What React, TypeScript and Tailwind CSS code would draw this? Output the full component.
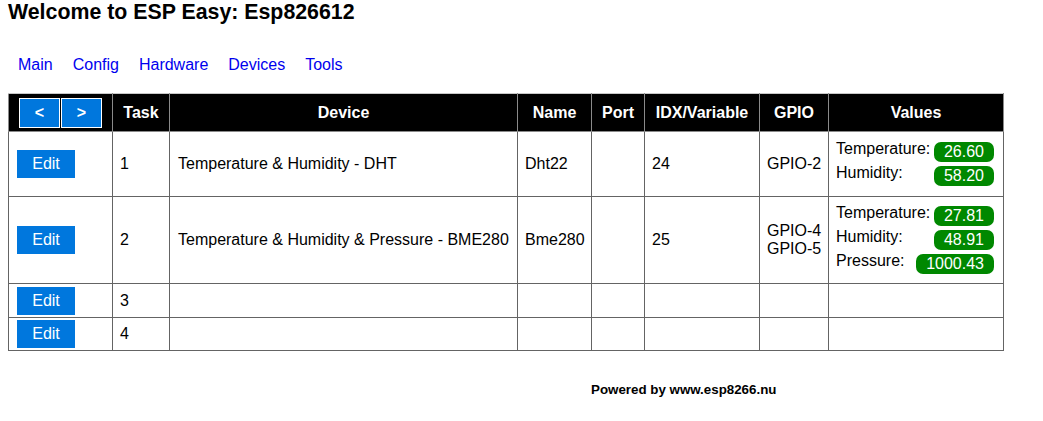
import React from "react";

type Value = { label: string; value: string };

type Task = {
  task: number;
  device?: string;
  name?: string;
  idx?: string;
  gpio?: string[];
  values?: Value[];
  h: string;
};

const tasks: Task[] = [
  {
    task: 1,
    device: "Temperature & Humidity - DHT",
    name: "Dht22",
    idx: "24",
    gpio: ["GPIO-2"],
    values: [
      { label: "Temperature:", value: "26.60" },
      { label: "Humidity:", value: "58.20" },
    ],
    h: "h-[65px]",
  },
  {
    task: 2,
    device: "Temperature & Humidity & Pressure - BME280",
    name: "Bme280",
    idx: "25",
    gpio: ["GPIO-4", "GPIO-5"],
    values: [
      { label: "Temperature:", value: "27.81" },
      { label: "Humidity:", value: "48.91" },
      { label: "Pressure:", value: "1000.43" },
    ],
    h: "h-[87px]",
  },
  { task: 3, h: "h-[34px]" },
  { task: 4, h: "h-[33px]" },
];

const navLinks = ["Main", "Config", "Hardware", "Devices", "Tools"];

const td = "border border-[#646464] px-[7px] py-0 align-middle text-left whitespace-nowrap";
const th = "border border-[#8a8a8a] border-t-[#c8c8c8] px-0 py-0 text-center font-bold text-white align-middle";

export default function App() {
  return (
    <div className="px-2 text-black text-[16px] leading-[18px]" style={{ fontFamily: '"Liberation Sans", Arial, sans-serif' }}>
      <h1 className="m-0 text-[21.33px] leading-[24px] font-bold">Welcome to ESP Easy: Esp826612</h1>

      <nav className="mt-[32px] flex">
        {navLinks.map((l) => (
          <a key={l} href="#" className="px-[10px] text-[#0000ee] leading-[18px]">
            {l}
          </a>
        ))}
      </nav>

      <table className="mt-[19px] w-[995px] table-fixed border-collapse">
        <colgroup>
          <col className="w-[104px]" />
          <col className="w-[57px]" />
          <col className="w-[348px]" />
          <col className="w-[74px]" />
          <col className="w-[53px]" />
          <col className="w-[115px]" />
          <col className="w-[69px]" />
          <col className="w-[175px]" />
        </colgroup>
        <thead>
          <tr className="h-[38px] bg-black">
            <th className={th + " text-left"}>
              <div className="flex gap-[1px] pl-[10px]">
                <span className="flex h-[30px] w-[41px] items-center justify-center border border-white bg-[#0077dd] font-bold">&lt;</span>
                <span className="flex h-[30px] w-[41px] items-center justify-center border border-white bg-[#0077dd] font-bold">&gt;</span>
              </div>
            </th>
            <th className={th}>Task</th>
            <th className={th}>Device</th>
            <th className={th}>Name</th>
            <th className={th}>Port</th>
            <th className={th}>IDX/Variable</th>
            <th className={th}>GPIO</th>
            <th className={th}>Values</th>
          </tr>
        </thead>
        <tbody>
          {tasks.map((t) => (
            <tr key={t.task} className={t.h}>
              <td className="border border-[#646464] py-0 pl-[8px] align-middle">
                <span className="inline-flex h-[28px] w-[58px] items-center justify-center bg-[#0077dd] text-white">Edit</span>
              </td>
              <td className={td}>{t.task}</td>
              <td className={td + " pl-[8px]"}>{t.device}</td>
              <td className={td}>{t.name}</td>
              <td className={td}></td>
              <td className={td}>{t.idx}</td>
              <td className={td}>
                {t.gpio?.map((g) => (
                  <div key={g}>{g}</div>
                ))}
              </td>
              <td className={td}>
                {t.values?.map((v) => (
                  <div key={v.label} className="flex items-start justify-between">
                    <span>{v.label}</span>
                    <span className="m-[2px] rounded-[7px] bg-[#008800] px-[10px] py-[1px] text-white">{v.value}</span>
                  </div>
                ))}
              </td>
            </tr>
          ))}
        </tbody>
      </table>

      <div className="mt-[31px] pl-[583px] text-[13.33px] font-bold leading-[15px]">Powered by www.esp8266.nu</div>
    </div>
  );
}
